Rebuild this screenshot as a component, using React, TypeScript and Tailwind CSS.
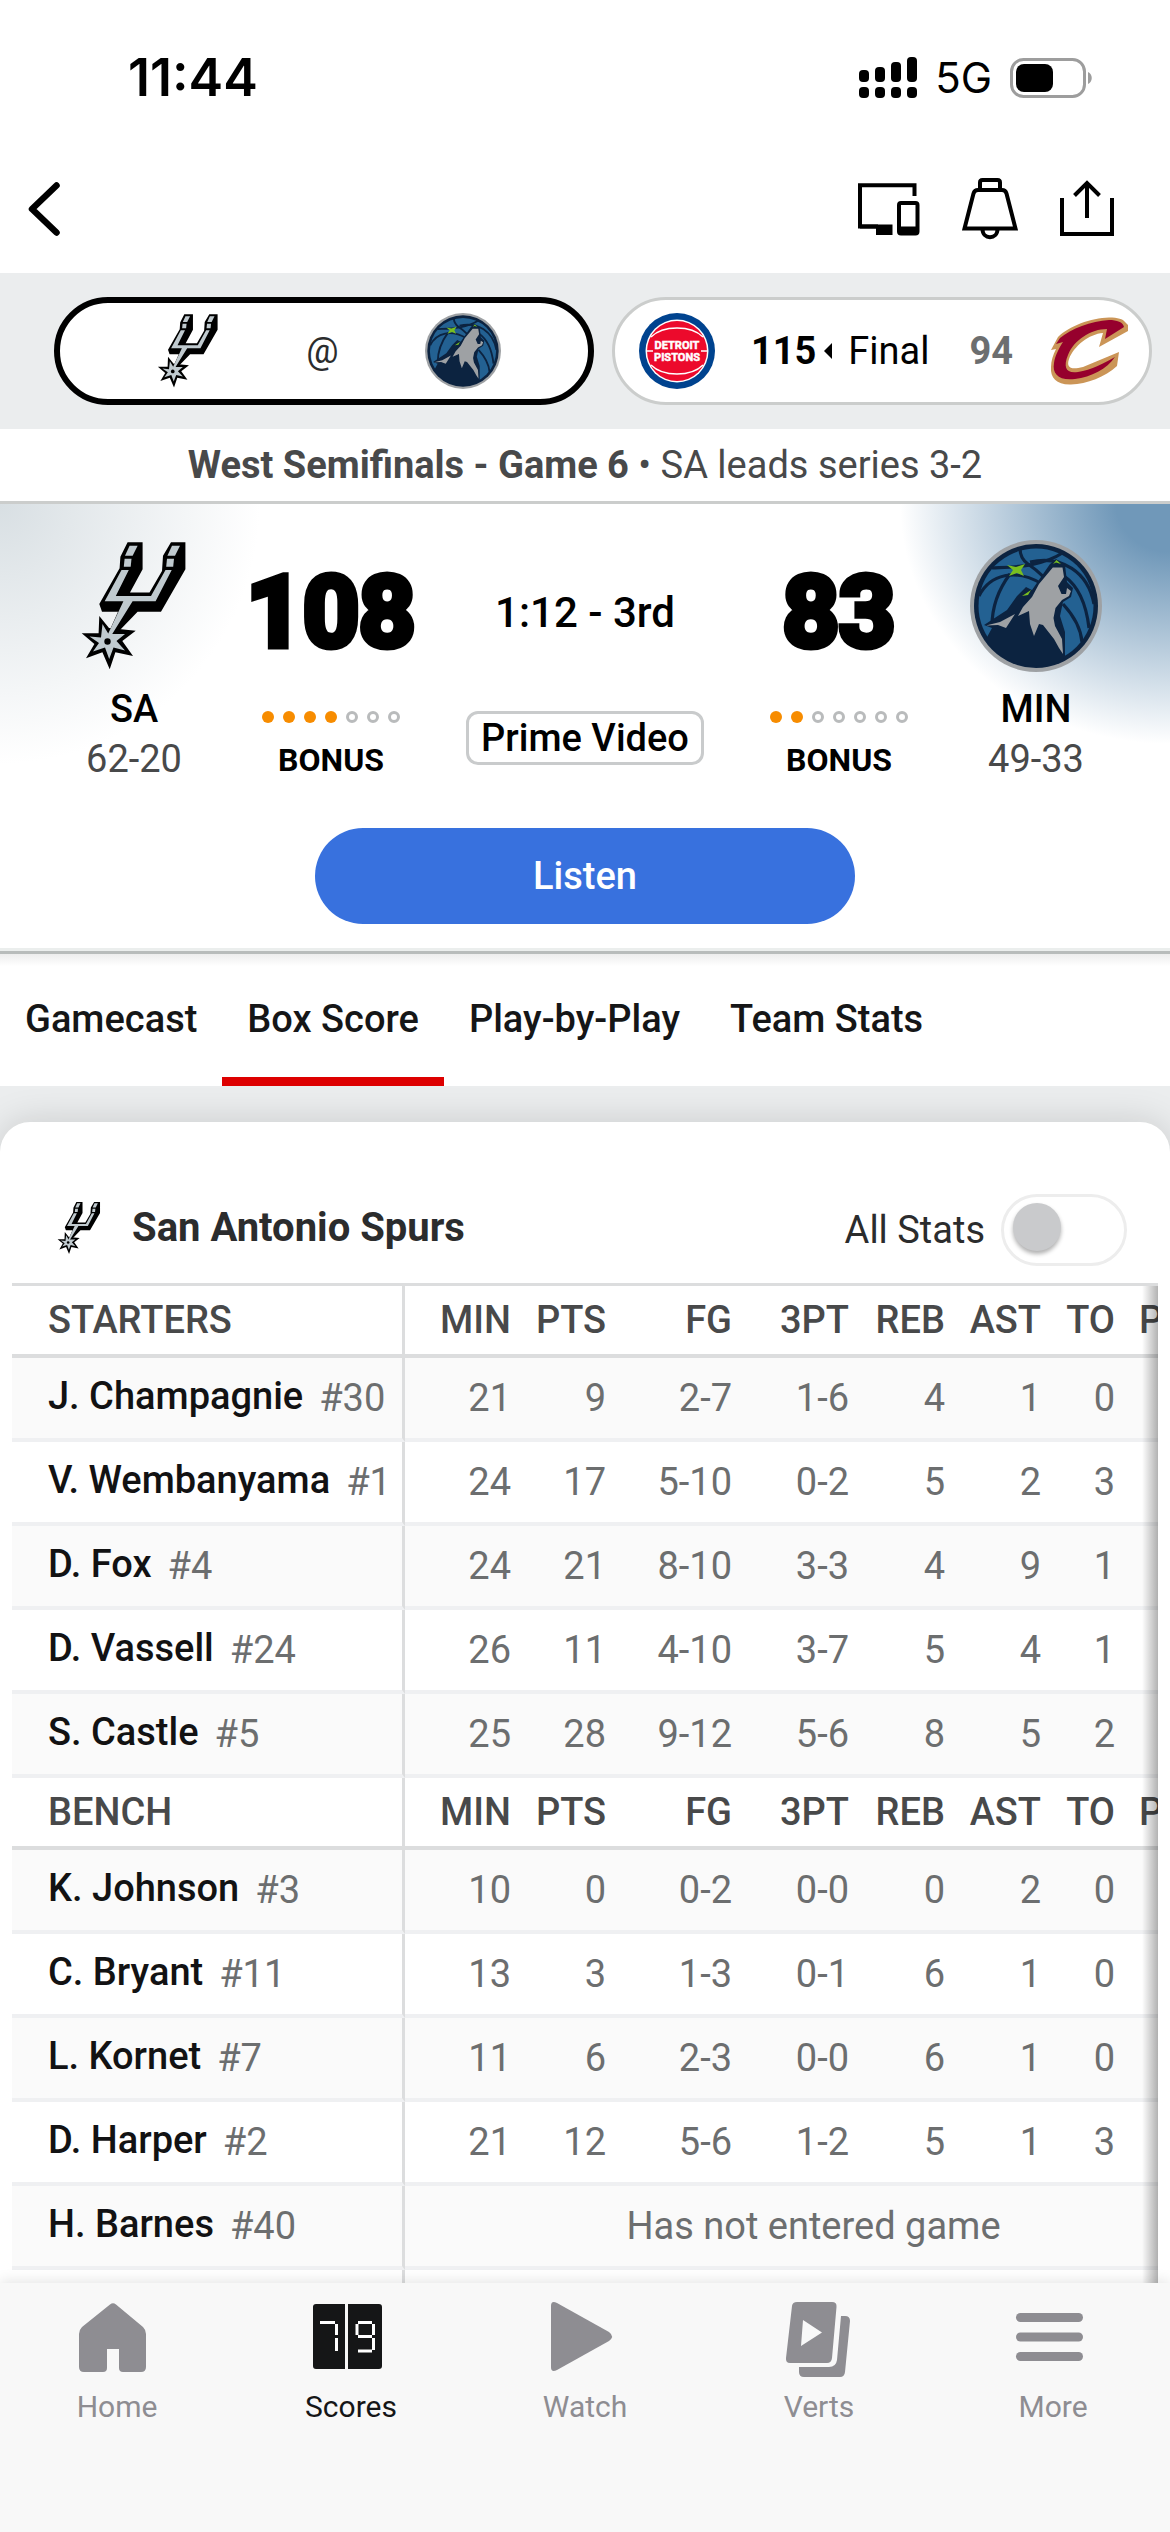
import { useState } from "react";
import type { ReactNode } from "react";
import clsx from "clsx";

interface LogoProps {
  className: string;
}

interface Player {
  name: string;
  number: string;
  stats?: string[];
}

const columns = ["MIN", "PTS", "FG", "3PT", "REB", "AST", "TO"];

const starters: Player[] = [
  { name: "J. Champagnie", number: "#30", stats: ["21", "9", "2-7", "1-6", "4", "1", "0"] },
  { name: "V. Wembanyama", number: "#1", stats: ["24", "17", "5-10", "0-2", "5", "2", "3"] },
  { name: "D. Fox", number: "#4", stats: ["24", "21", "8-10", "3-3", "4", "9", "1"] },
  { name: "D. Vassell", number: "#24", stats: ["26", "11", "4-10", "3-7", "5", "4", "1"] },
  { name: "S. Castle", number: "#5", stats: ["25", "28", "9-12", "5-6", "8", "5", "2"] },
];

const bench: Player[] = [
  { name: "K. Johnson", number: "#3", stats: ["10", "0", "0-2", "0-0", "0", "2", "0"] },
  { name: "C. Bryant", number: "#11", stats: ["13", "3", "1-3", "0-1", "6", "1", "0"] },
  { name: "L. Kornet", number: "#7", stats: ["11", "6", "2-3", "0-0", "6", "1", "0"] },
  { name: "D. Harper", number: "#2", stats: ["21", "12", "5-6", "1-2", "5", "1", "3"] },
  { name: "H. Barnes", number: "#40" },
];

const tabs = ["Gamecast", "Box Score", "Play-by-Play", "Team Stats"];

function SpursLogo({ className }: LogoProps) {
  return (
    <svg viewBox="0 0 108 132" className={className} aria-hidden="true">
      <path
        fill="#000"
        d="M47.6 2.3H62.6V29.3L50 52.5H69.5L82 31L83 15.7L91 2.3H105.4V29.3L81 71.7H57.6L40 90L28 94L38 71.7H22L19.3 64L39.6 28.3L40.4 16.7Z"
      />
      <path
        fill="#000"
        d="M19.3 76L29 88L55.7 90.7L42.3 101L53 116L35.4 112.3L29.7 129.3L22.4 112.3L6 118.3L14.4 104L1.7 93.3L18.6 93.3Z"
      />
      <g fill="#c0cacf">
        <path d="M49.6 5.7H57.6L52.6 15.7H45Z" />
        <path d="M44.6 18.7H51.5L50.7 26.7H43.8Z" />
        <path d="M92 5.7H100L95 15.7H87.4Z" />
        <path d="M87 18.7H94L93.2 26.7H86.2Z" />
        <path d="M41.5 30H48.8L35.8 56H71L85.5 30H91.7L75.6 61.3H52.6L31 96L28 94L43.4 61.3H24.7Z" />
        <path d="M22.5 84L28.5 94L45 94L36.5 101L45 110.5L33.5 107.5L29.2 119L25 107.5L13 111.5L19 103L9.5 96.5L21 97.5Z" />
      </g>
      <circle cx="27.5" cy="101.5" r="3.2" />
    </svg>
  );
}

function WolvesLogo({ className }: LogoProps) {
  return (
    <svg viewBox="0 0 132 132" className={className} aria-hidden="true">
      <circle cx="66" cy="66" r="66" fill="#9ea1a4" />
      <circle cx="66" cy="66" r="62" fill="#0c2340" />
      <circle cx="66" cy="66" r="57.5" fill="#236192" />
      <g fill="none" stroke="#0c2340" strokeWidth="3.2">
        <path d="M50 8C50 15 52 20 58 24C68 31 76 38 80 46" />
        <path d="M22 28C40 27 70 28 94 12" />
        <path d="M9 56C20 34 46 28 72 44" />
        <path d="M40 34C28 50 22 66 22 86" />
        <path d="M60 22C92 15 118 32 124 64" />
        <path d="M94 36C107 45 116 62 119 88" />
        <path d="M93 64C104 76 111 90 112 102" />
      </g>
      <path
        fill="#0c2340"
        d="M80 24L86 19L95 25L97 42L103 48L101 57L93 62L90 76L95 92L95 118C68 134 30 124 16 99L22 88L14 85L37 70L47 56L56 47L62 50Z"
      />
      <path
        fill="#9ea1a4"
        d="M82.8 27.5L92.5 27.5L94 37L88 46L91.5 54L96 54L97 48L101 51L99 56L92 60L85.5 68L83.5 78L85 86L92 99L93 114L89 108L84 99L73 85L69 84L64 96L60 84L59 71L48 76L53 67L62 57L69 44Z"
      />
      <path fill="#9ea1a4" d="M16 85.5L30 82L45 74L36 88L28 85Z" />
      <path
        fill="#78be20"
        d="M37 25L46 27L55 24L51 30L54 36L47 33L39 36L43 30Z M83 24L86.5 20L91 24L86 22.5Z M52 56L61 50L58 55Z"
      />
    </svg>
  );
}

function PistonsLogo({ className }: LogoProps) {
  return (
    <svg viewBox="0 0 76 76" className={className} aria-hidden="true">
      <circle cx="38" cy="38" r="38" fill="#00438f" />
      <circle cx="38" cy="38" r="31.5" fill="#fff" />
      <circle cx="38" cy="38" r="30" fill="#ec0a2c" />
      <g fill="none" stroke="#fff" strokeWidth="1.4">
        <path d="M12 24C24 12 52 12 64 24" />
        <path d="M12 52C24 64 52 64 64 52" />
        <path d="M8 38H14M62 38H68" />
      </g>
      <g
        fill="#fff"
        stroke="#fff"
        strokeWidth="0.5"
        fontFamily="Roboto, sans-serif"
        fontWeight="700"
        fontSize="11"
        textAnchor="middle"
      >
        <text x="38" y="36">DETROIT</text>
        <text x="38" y="48">PISTONS</text>
      </g>
    </svg>
  );
}

function CavsLogo({ className }: LogoProps) {
  return (
    <svg viewBox="0 0 80 68" className={className} aria-hidden="true">
      <path
        fill="#cb9557"
        d="M2 33L9 20C20 9 42 1 60 0.5C69 0.5 74 2 76 5L79 8V14L50 30L54 16C40 17 25 29 20 42C17 51 22 53 34 50L70 35L68 49C56 60 38 67 22 67.5C8 68 1 61 2 50C2 44 4 38 7 32Z"
      />
      <path
        fill="#96002d"
        d="M7 27L11 21C22 12 42 4 60 3C68 3 74 5 75 10L56 22L58 12C42 12 25 23 19 38C14 50 17 57 29 55C42 53 56 46 66 40C58 52 42 60 26 62C10 64 3 57 5 46C6 39 10 31 14 25Z"
      />
    </svg>
  );
}

function StatusBar() {
  return (
    <div className="flex h-[156px] items-center justify-between pr-[78px] pl-32">
      <span className="font-[Inter,sans-serif] text-[52px] font-semibold">11:44</span>
      <div className="flex items-center gap-[18px]">
        <svg viewBox="0 0 58 42" className="h-[42px] w-[58px]" aria-hidden="true">
          <rect x="0" y="13" width="10" height="12" rx="4" />
          <rect x="16" y="10" width="10" height="15" rx="4" />
          <rect x="32" y="5" width="10" height="20" rx="4" />
          <rect x="48" y="0" width="10" height="25" rx="4" />
          <rect x="0" y="30" width="10" height="11" rx="4" />
          <rect x="16" y="30" width="10" height="11" rx="4" />
          <rect x="32" y="30" width="10" height="11" rx="4" />
          <rect x="48" y="30" width="10" height="11" rx="4" />
        </svg>
        <span className="font-[Inter,sans-serif] text-[42px] leading-none">5G</span>
        <svg viewBox="0 0 82 40" className="h-10 w-[82px]" aria-hidden="true">
          <rect x="1.5" y="1.5" width="73" height="37" rx="12" fill="#fff" stroke="#9d9d9d" strokeWidth="3" />
          <rect x="6" y="6" width="37" height="28" rx="8" />
          <path d="M78 14C83 16 83 24 78 26Z" fill="#9d9d9d" />
        </svg>
      </div>
    </div>
  );
}

function TopBar() {
  return (
    <div className="flex h-[117px] items-center justify-between pr-14 pb-3 pl-7">
      <button aria-label="Back">
        <svg viewBox="0 0 32 54" className="h-[54px] w-8" aria-hidden="true">
          <path d="M28.5 3.5L4 27L28.5 50.5" fill="none" stroke="#000" strokeWidth="6.5" strokeLinecap="round" strokeLinejoin="round" />
        </svg>
      </button>
      <div className="flex items-center gap-[42px]">
        <button aria-label="Cast to device">
          <svg viewBox="0 0 62 62" className="size-[62px]" aria-hidden="true">
            <path d="M56.5 18V7.2H2V48.5H20" fill="none" stroke="#000" strokeWidth="4" />
            <path d="M2 46.5H34.5V57H18V50.5H2Z" />
            <rect x="41" y="25" width="18.5" height="30.5" rx="2" fill="#fff" stroke="#000" strokeWidth="4" />
            <path d="M40 48.5H60V54Q60 57 57 57H43Q40 57 40 54Z" />
          </svg>
        </button>
        <button aria-label="Alerts">
          <svg viewBox="0 0 56 62" className="h-[62px] w-14" fill="none" stroke="#000" strokeWidth="4" aria-hidden="true">
            <path d="M18 12V4.5Q18 2 20.5 2H35.5Q38 2 38 4.5V12" />
            <path d="M2.5 50.5L11.5 15.5Q12.500 12 16 12H40Q43.5 12 44.500 15.5L53.5 50.5Z" />
            <path d="M20.5 51C20.5 62 35.5 62 35.5 51" />
          </svg>
        </button>
        <button aria-label="Share">
          <svg viewBox="0 0 54 62" className="h-[62px] w-[54px]" fill="none" stroke="#000" strokeWidth="4" aria-hidden="true">
            <path d="M2 20V56H52V20M27 40V6M14.5 17.5L27 5L39.5 17.5" />
          </svg>
        </button>
      </div>
    </div>
  );
}

function GameStrip() {
  return (
    <div className="grid grid-cols-2 gap-[18px] bg-[#ebedee] py-6 pr-[18px] pl-[54px]">
      <button className="flex h-[108px] items-center justify-between rounded-full border-6 border-black bg-white pr-[87px] pl-24">
        <SpursLogo className="h-19 w-16" />
        <span className="text-4xl text-[#2b2c2d]">@</span>
        <WolvesLogo className="size-19" />
      </button>
      <button className="flex h-[108px] items-center justify-between rounded-full border-3 border-[#cbcdcc] bg-white pr-5 pl-6">
        <PistonsLogo className="size-19" />
        <span className="flex items-center text-[38px]">
          <span className="font-bold">115</span>
          <svg viewBox="0 0 8 16" className="ml-2 h-4 w-2" aria-hidden="true">
            <path d="M8 0V16L0 8Z" />
          </svg>
          <span className="ml-4">Final</span>
          <span className="ml-10 font-bold text-[#6c6e6f]">94</span>
        </span>
        <CavsLogo className="h-17 w-20" />
      </button>
    </div>
  );
}

function Timeouts({ left }: { left: number }) {
  return (
    <div className="flex h-[66px] items-center gap-[9px]">
      {[0, 1, 2, 3, 4, 5, 6].map((i) => (
        <span
          key={i}
          className={clsx("size-3 rounded-full", i < left ? "bg-[#f78c00]" : "border-3 border-[#b9bbbc] bg-white")}
        />
      ))}
    </div>
  );
}

function Team({ logo, name, record }: { logo: ReactNode; name: string; record: string }) {
  return (
    <div className="flex flex-col items-center text-[38px] leading-[50px]">
      {logo}
      <span className="mt-3 font-medium">{name}</span>
      <span className="text-[#48494a]">{record}</span>
    </div>
  );
}

function Score({ points, timeouts }: { points: string; timeouts: number }) {
  return (
    <div className="flex flex-col items-center">
      <span className="flex h-36 items-center text-[98px] font-bold [-webkit-text-stroke:7px_#000]">{points}</span>
      <Timeouts left={timeouts} />
      <span className="text-[32px] leading-5 font-bold">BONUS</span>
    </div>
  );
}

function Scoreboard() {
  return (
    <section className="border-t-3 border-[#cbcdcc] bg-[radial-gradient(260px_260px_at_0_0,#d8dfe3,#ffffff00),radial-gradient(270px_240px_at_100%_0,#7098b9_20%,#ffffff00)] px-6 pt-9 pb-6">
      <div className="grid grid-cols-[220px_174px_1fr_174px_220px]">
        <Team logo={<SpursLogo className="h-[132px] w-[108px]" />} name="SA" record="62-20" />
        <Score points="108" timeouts={4} />
        <div className="flex flex-col items-center">
          <span className="flex h-36 items-center text-[42px] font-medium">1:12 - 3rd</span>
          <a href="#watch" className="mt-[27px] flex h-[54px] items-center rounded-xl border-3 border-[#c9cbcc] px-3 text-[38px] font-medium">
            Prime Video
          </a>
        </div>
        <Score points="83" timeouts={2} />
        <Team logo={<WolvesLogo className="size-[132px]" />} name="MIN" record="49-33" />
      </div>
      <button className="mx-auto mt-11 block h-24 w-[540px] rounded-full bg-[#3871de] text-[38px] font-medium text-white">
        Listen
      </button>
    </section>
  );
}

function SectionHeader({ title }: { title: string }) {
  return (
    <tr className="h-[72px] text-[#48494a]">
      <th scope="col" className="border-r-3 border-b-4 border-[#dcddde] pl-9 text-left font-medium">
        {title}
      </th>
      {columns.map((c) => (
        <th key={c} scope="col" className="border-b-4 border-[#dcddde] pr-3.5 text-right font-medium">
          {c}
        </th>
      ))}
      <th scope="col" className="overflow-hidden border-b-4 border-[#dcddde] pl-2.5 text-left font-medium">
        PF
      </th>
    </tr>
  );
}

function PlayerRow({ player, shaded }: { player: Player; shaded: boolean }) {
  return (
    <tr className={clsx("h-[84px] text-[#6c6e6f]", shaded && "bg-[#fafafa]")}>
      <th scope="row" className="border-r-3 border-b-4 border-r-[#dcddde] border-b-[#eff0f2] pl-9 text-left font-normal whitespace-nowrap">
        <a href="#player" className="relative bottom-0.5 font-medium text-[#121213]">{player.name}</a>
        <span className="ml-4">{player.number}</span>
      </th>
      {player.stats ? (
        <>
          {player.stats.map((s, i) => (
            <td key={i} className="border-b-4 border-[#eff0f2] pr-3.5 text-right">
              {s}
            </td>
          ))}
          <td className="border-b-4 border-[#eff0f2]" />
        </>
      ) : (
        <td colSpan={8} className="border-b-4 border-[#eff0f2] pl-16 text-center">
          Has not entered game
        </td>
      )}
    </tr>
  );
}

function BoxScore() {
  const [allStats, setAllStats] = useState(false);

  return (
    <section className="rounded-t-[30px] bg-white px-3 pt-[72px] shadow-[0_0_36px_#00000026]">
      <div className="flex h-[89px] items-start justify-between pr-[31px] pl-11">
        <div className="flex h-[68px] items-center gap-[30px]">
          <SpursLogo className="h-[54px] w-[46px]" />
          <h2 className="text-[40px] font-bold text-[#2b2c2d]">San Antonio Spurs</h2>
        </div>
        <label className="flex h-[72px] items-center gap-4 text-[38px] text-[#2b2c2d]">
          All Stats
          <input
            type="checkbox"
            role="switch"
            checked={allStats}
            onChange={() => setAllStats(!allStats)}
            className="h-[72px] w-[126px] appearance-none rounded-full border-3 border-[#ededed] bg-white pt-1.5 pl-[9px] before:block before:size-12 before:rounded-full before:bg-[#c9cacc] before:shadow-[0_3px_4px_#00000050] checked:before:ml-12"
          />
        </label>
      </div>
      <div className="relative overflow-hidden border-t-3 border-[#dcddde]">
        <table className="w-full table-fixed border-separate border-spacing-0 text-[38px] leading-none">
          <colgroup>
            <col className="w-[393px]" />
            <col className="w-[120px]" />
            <col className="w-[95px]" />
            <col className="w-[126px]" />
            <col className="w-[117px]" />
            <col className="w-24" />
            <col className="w-24" />
            <col className="w-[74px]" />
            <col />
          </colgroup>
          <tbody>
            <SectionHeader title="STARTERS" />
            {starters.map((p, i) => (
              <PlayerRow key={p.name} player={p} shaded={i % 2 === 0} />
            ))}
            <SectionHeader title="BENCH" />
            {bench.map((p, i) => (
              <PlayerRow key={p.name} player={p} shaded={i % 2 === 0} />
            ))}
            <tr className="h-[84px]">
              <td className="border-r-3 border-[#dcddde]" />
              <td colSpan={8} />
            </tr>
          </tbody>
        </table>
        {/* more columns hide behind this edge */}
        <div className="pointer-events-none absolute inset-y-0 right-0 w-4 bg-linear-to-r from-transparent to-black/30" />
      </div>
    </section>
  );
}

function NavItem({ label, active, children }: { label: string; active?: boolean; children: ReactNode }) {
  return (
    <a
      href={"#" + label.toLowerCase()}
      className={clsx("flex flex-1 flex-col items-center pt-4 text-3xl", active ? "text-[#151617]" : "text-[#8e8d92]")}
    >
      <svg viewBox="0 0 80 80" className="size-20" fill="currentColor" aria-hidden="true">
        {children}
      </svg>
      <span className="mt-2.5">{label}</span>
    </a>
  );
}

function BottomNav() {
  return (
    <nav className="relative flex h-[249px] shrink-0 bg-[#f8f8f8] shadow-[0_-3px_12px_#00000018]">
      <NavItem label="Home">
        <path d="M33 5.5Q36 3 39 5.5L66 28Q69 31 69 35V68Q69 73 64 73H46Q42 73 42 69V50H30V69Q30 73 26 73H7Q2 73 2 68V35Q2 31 5 28Z" />
      </NavItem>
      <NavItem label="Scores" active>
        <path d="M5 5H34V70H5Q2 70 2 67V8Q2 5 5 5ZM37 5H68Q71 5 71 8V67Q71 70 68 70H37Z" />
        <g fill="none" stroke="#fff" strokeWidth="3">
          <path d="M9 23.5H24M25.5 25V36M25.5 39V52" />
          <path d="M47 23.5H61M46 25V36M62.5 25V36M47 37.5H61M62.5 39V51M47 52H61" />
        </g>
      </NavItem>
      <NavItem label="Watch">
        <path d="M6 7Q6 1 12 4L64 33Q70 37.5 64 42L12 71Q6 74 6 68Z" />
      </NavItem>
      <NavItem label="Verts">
        <path fillRule="evenodd" d="M13 7Q13.5 3 18 3H53Q58 3 57.5 8L53 59Q52.5 64 48 64H11Q6.5 64 7 59ZM24 21L22 47L43 33.5Z" />
        <path d="M62 17H66Q71 17 71 22L66 73Q65.5 78 61 78H25Q20 78 20 73V68H50Q57 68 58 61Z" />
      </NavItem>
      <NavItem label="More">
        <rect x="3" y="14" width="67" height="9" rx="4.5" />
        <rect x="3" y="33.5" width="67" height="9" rx="4.5" />
        <rect x="3" y="53" width="67" height="9" rx="4.5" />
      </NavItem>
    </nav>
  );
}

export default function App() {
  const [tab, setTab] = useState("Box Score");

  return (
    <div className="flex h-screen flex-col bg-white font-[Roboto,sans-serif] text-black">
      <header className="shrink-0">
        <StatusBar />
        <TopBar />
      </header>
      <main className="flex-1 overflow-y-auto [scrollbar-width:none]">
        <GameStrip />
        <p className="text-center text-[38px] leading-[72px] text-[#48494a]">
          <span className="font-bold">West Semifinals - Game 6</span> • SA leads series 3-2
        </p>
        <Scoreboard />
        <div className="border-t-3 border-[#ebeeed]">
          <div className="flex border-t-3 border-[#b8bcbb] bg-[linear-gradient(#ededed,#fff_12px)]">
            {tabs.map((t) => (
              <button
                key={t}
                onClick={() => setTab(t)}
                className={clsx(
                  "h-[132px] border-b-9 px-[25px] pt-2 text-[38px] font-medium text-[#151617]",
                  t === tab ? "border-[#dd0000]" : "border-transparent"
                )}
              >
                {t}
              </button>
            ))}
          </div>
        </div>
        <div className="overflow-hidden bg-[#ebedee] pt-9">
          <BoxScore />
        </div>
      </main>
      <BottomNav />
    </div>
  );
}
